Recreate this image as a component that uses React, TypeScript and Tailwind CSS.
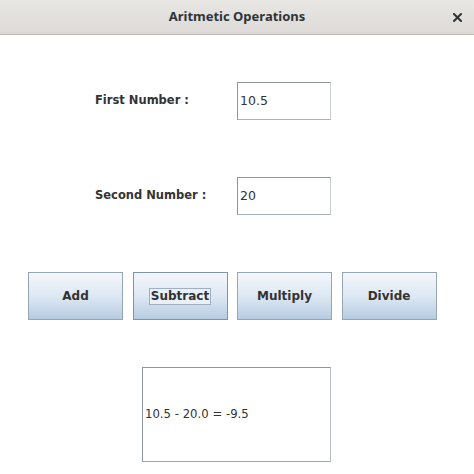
import React from "react";

// Swing-style "Aritmetic Operations" window

const buttons = ["Add", "Subtract", "Multiply", "Divide"];

const FieldRow: React.FC<{ label: string; value: string; className?: string }> = ({
  label,
  value,
  className,
}) => (
  <div className={`flex items-center pl-[95px] ${className ?? ""}`}>
    <span className="w-[142px] text-[11.5px] font-bold text-[#333]">{label}</span>
    <div className="w-[94px] h-[38px] flex items-center pl-[2px] bg-white border border-[#8e959c] border-r-[#c9ced3] border-b-[#aab1b8] text-[12.5px] text-[#333]">
      {value}
    </div>
  </div>
);

export default function App() {
  return (
    <div
      className="w-[474px] h-[474px] bg-white flex flex-col overflow-hidden"
      style={{ fontFamily: '"DejaVu Sans", sans-serif' }}
    >
      {/* title bar */}
      <div className="relative h-[35px] shrink-0 flex items-center justify-center bg-gradient-to-b from-[#e9e7e4] to-[#dcd9d6] border-b border-[#c0bcb8]">
        <span
          className="text-[13px] font-bold text-[#2e3436]"
          style={{ fontFamily: '"Noto Sans", "Open Sans", sans-serif' }}
        >
          Aritmetic Operations
        </span>
        <svg
          className="absolute right-[12px] top-[13px]"
          width="9"
          height="9"
          viewBox="0 0 9 9"
        >
          <path d="M1 1 L8 8 M8 1 L1 8" stroke="#2e3436" strokeWidth="2" strokeLinecap="square" />
        </svg>
      </div>

      <FieldRow label="First Number :" value="10.5" className="mt-[47px]" />
      <FieldRow label="Second Number :" value="20" className="mt-[57px]" />

      {/* operation buttons */}
      <div className="flex gap-[9.5px] pl-[28px] mt-[57px]">
        {buttons.map((b) => (
          <button
            key={b}
            className={`w-[95px] h-[48px] flex items-center justify-center text-[12px] font-bold text-[#333] bg-gradient-to-b from-[#f4f7fb] via-[#dde8f3] to-[#b7cce2] border ${
              b === "Subtract" ? "border-[#7f93ab]" : "border-[#95a5b6]"
            }`}
          >
            {b === "Subtract" ? (
              <span className="px-[1px] leading-[15px] border border-[#9fb0c4] bg-[#e9f0f8]">{b}</span>
            ) : (
              b
            )}
          </button>
        ))}
      </div>

      {/* result area */}
      <div className="ml-[142px] mt-[47px] w-[189px] h-[95px] flex items-center pl-[2px] border border-[#8e959c] border-r-[#b9bec3] border-b-[#a0a7ae] text-[11.7px] text-[#333]">
        10.5 - 20.0 = -9.5
      </div>
    </div>
  );
}
